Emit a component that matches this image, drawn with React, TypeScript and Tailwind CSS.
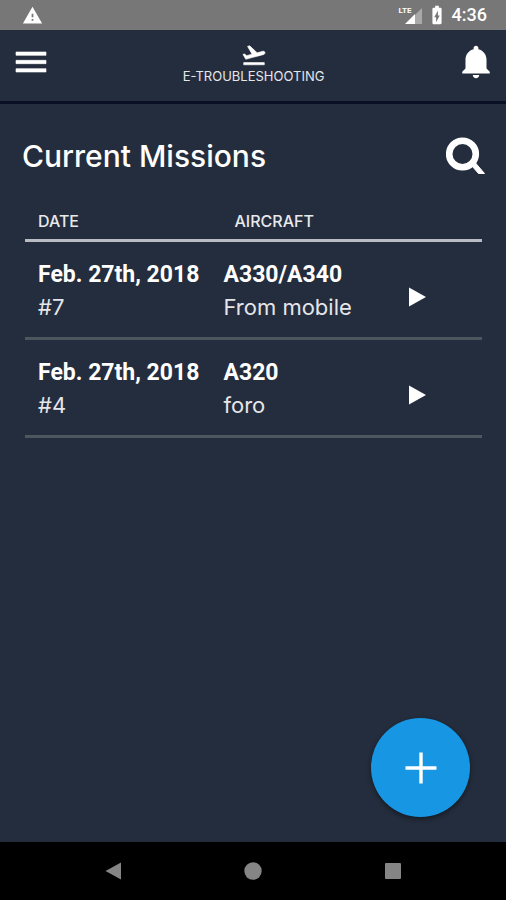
import { IoMdMenu, IoMdNotifications } from 'react-icons/io'
import { MdBatteryChargingFull, MdWarning } from 'react-icons/md'

interface Mission {
  id: number
  date: string
  aircraft: string
  note: string
}

const missions: Mission[] = [
  { id: 7, date: 'Feb. 27th, 2018', aircraft: 'A330/A340', note: 'From mobile' },
  { id: 4, date: 'Feb. 27th, 2018', aircraft: 'A320', note: 'foro' },
]

export default function App() {
  return (
    <div className="flex min-h-screen flex-col bg-[#242d3d] font-[Inter,sans-serif] text-white">
      <StatusBar />
      <Header />
      <main className="relative flex-1 pt-8">
        <div className="flex items-center justify-between pl-[22px] pr-5">
          <h1 className="text-[30px] leading-10 font-medium">Current Missions</h1>
          <button type="button" aria-label="Search">
            <SearchIcon />
          </button>
        </div>
        <MissionTable />
        <button
          type="button"
          aria-label="Add mission"
          className="absolute right-9 bottom-[25px] flex size-[99px] items-center justify-center rounded-full bg-[#1797e3] shadow-[0_2px_5px_rgba(0,0,0,0.45)]"
        >
          <svg viewBox="0 0 32 32" className="size-8" stroke="currentColor" strokeWidth="3.4" aria-hidden>
            <path d="M16 0.5v31M0.5 16h31" />
          </svg>
        </button>
      </main>
      <NavBar />
    </div>
  )
}

function StatusBar() {
  return (
    <div className="flex h-[30px] items-center justify-between bg-[#777777] pr-[19px] pl-[22px]">
      <MdWarning className="size-[21px]" />
      <div className="flex items-center gap-1">
        <div className="relative">
          <SignalIcon />
          <span className="absolute top-0.5 left-0 font-[Roboto,sans-serif] text-[8px] leading-2 font-bold">LTE</span>
        </div>
        <MdBatteryChargingFull className="size-[22px]" />
        <span className="font-[Roboto,sans-serif] text-lg leading-5 font-medium">4:36</span>
      </div>
    </div>
  )
}

function Header() {
  return (
    <header className="flex h-[74px] items-start justify-between border-b-[3px] border-[#0a1026] pt-3 pr-[10px] pl-[11px]">
      <button type="button" aria-label="Menu">
        <IoMdMenu className="size-10" stroke="currentColor" strokeWidth="8" />
      </button>
      <div className="flex flex-col items-center">
        <TakeoffIcon />
        <span className="text-[13px] leading-4 text-[#e4e6ea]">E-TROUBLESHOOTING</span>
      </div>
      <button type="button" aria-label="Notifications">
        <IoMdNotifications className="size-10" />
      </button>
    </header>
  )
}

function MissionTable() {
  return (
    <div className="mt-7 pr-6 pl-[25px]">
      <table className="w-full table-fixed border-collapse text-left">
        <thead>
          <tr className="h-9 border-b-[3px] border-[#b9bac2] text-base leading-5 text-[#e8e9ec]">
            <th className="w-[43%] pl-[13px] font-medium">DATE</th>
            <th className="w-[41%] pl-[13px] font-medium">AIRCRAFT</th>
            <th aria-label="Open" />
          </tr>
        </thead>
        <tbody>
          {missions.map((m) => (
            <tr key={m.id} className="h-[98px] border-b-[3px] border-[#4d555f]">
              <td className="pt-1 pl-[13px]">
                <Cell title={m.date} detail={`#${m.id}`} />
              </td>
              <td className="pt-1 pl-0.5">
                <Cell title={m.aircraft} detail={m.note} />
              </td>
              <td className="pt-4">
                <button type="button" aria-label={`Open mission ${m.id}`} className="block">
                  <svg viewBox="0 0 18 20" className="h-5 w-[18px]" fill="currentColor" aria-hidden>
                    <path d="M0 0.5L17 10L0 19.5Z" />
                  </svg>
                </button>
              </td>
            </tr>
          ))}
        </tbody>
      </table>
    </div>
  )
}

function Cell({ title, detail }: { title: string; detail: string }) {
  return (
    <>
      <p className="font-[Roboto,sans-serif] text-[23px] leading-8 font-bold whitespace-nowrap">{title}</p>
      <p className="text-[22px] leading-8 text-[#e4e6ea]">{detail}</p>
    </>
  )
}

function NavBar() {
  return (
    <nav className="flex h-[58px] items-center justify-between bg-black px-[104px] text-[#858585]">
      <button type="button" aria-label="Back">
        <svg viewBox="0 0 18 18" className="size-[18px]" fill="currentColor" aria-hidden>
          <path d="M17 0.5v17L1.5 9Z" />
        </svg>
      </button>
      <button type="button" aria-label="Home">
        <svg viewBox="0 0 18 18" className="size-[18px]" fill="currentColor" aria-hidden>
          <circle cx="9" cy="9" r="8.7" />
        </svg>
      </button>
      <button type="button" aria-label="Recent apps">
        <svg viewBox="0 0 18 18" className="size-[18px]" fill="currentColor" aria-hidden>
          <rect x="1" y="1" width="16" height="16" rx="1" />
        </svg>
      </button>
    </nav>
  )
}

function TakeoffIcon() {
  return (
    <svg viewBox="0 0 24 24" className="size-[26px]" fill="currentColor" stroke="currentColor" strokeWidth="0.6" aria-hidden>
      <path d="M2.5 19h19v2h-19z" />
      <path d="M22.07 9.64c-.21-.8-1.04-1.28-1.84-1.06L14.92 10l-6.9-6.43-1.93.51 4.14 7.17-4.97 1.33-1.97-1.54-1.45.39 2.59 4.49s7.12-1.9 16.57-4.43c.81-.23 1.28-1.05 1.07-1.85z" />
    </svg>
  )
}

function SearchIcon() {
  return (
    <svg viewBox="0 0 40 38" className="h-[38px] w-10" fill="none" stroke="currentColor" aria-hidden>
      <circle cx="16.5" cy="17" r="13.3" strokeWidth="6.6" />
      <path d="M22 28L26 29L32.5 36.5H38.5L29.5 26L29 22Z" fill="currentColor" strokeWidth="1" />
    </svg>
  )
}

function SignalIcon() {
  return (
    <svg viewBox="0 0 23 20" className="h-5 w-[23px]" fill="currentColor" aria-hidden>
      <path d="M23 3v16h-7v-9Z" fill="#a9a9a9" />
      <path d="M6 19L16 9v10Z" />
    </svg>
  )
}
